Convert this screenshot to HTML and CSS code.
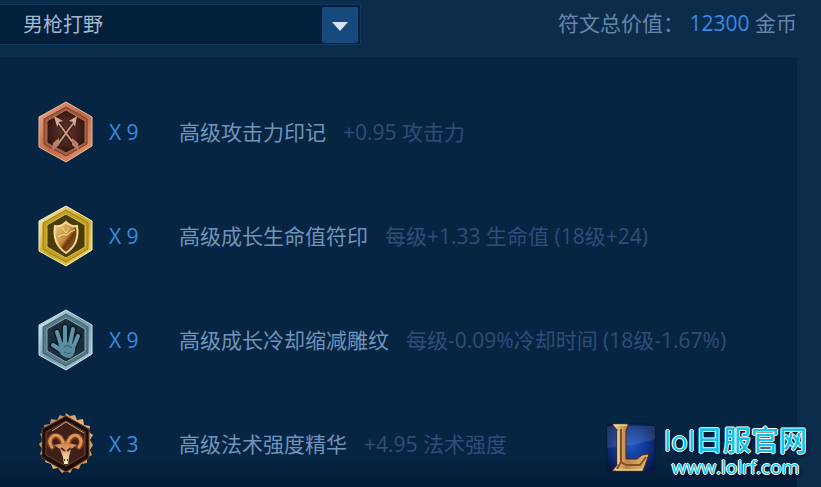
FILE: index.html
```html
<!DOCTYPE html>
<html lang="zh-CN">
<head>
    <meta charset="UTF-8">
    <meta name="viewport" content="width=device-width, initial-scale=1.0">
    <title>符文</title>
    <link rel="stylesheet" href="styles.css">
</head>
<body>

    <div class="topbar">
        <div class="select-box">
            <select class="page-select" aria-label="符文页">
                <option>男枪打野</option>
            </select>
            <svg class="select-arrow" viewBox="0 0 36 36" aria-hidden="true">
                <path d="M10 15h16l-8 9z" fill="#d5e2f2"/>
            </svg>
        </div>
        <div class="total">符文总价值： <span class="price">12300</span> 金币</div>
    </div>

    <ul class="runes">
        <li class="rune">
            <svg class="rune-icon" viewBox="0 0 56 62" aria-hidden="true">
                <defs>
                    <linearGradient id="redEdge" x1="0" y1="0" x2="1" y2="1">
                        <stop offset="0" stop-color="#efa98a"/>
                        <stop offset=".5" stop-color="#bd6848"/>
                        <stop offset="1" stop-color="#eb9c74"/>
                    </linearGradient>
                    <radialGradient id="redCore">
                        <stop offset="0" stop-color="#63382c"/>
                        <stop offset="1" stop-color="#361713"/>
                    </radialGradient>
                </defs>
                <path d="M28 1 54 16v29L28 61 1 46V16z" fill="url(#redEdge)" stroke="#f0b89c"/>
                <path d="M28 6 49 18v25L28 55 6 43V18z" fill="#a65a40" stroke="#7c3a2a"/>
                <path d="M28 9 47 20v22L28 52 9 42V20z" fill="url(#redCore)" stroke="#b06a4d"/>
                <path d="M19 20 36 43M37 20 20 43" stroke="#35150f" stroke-width="4"/>
                <path d="M19 20 36 43M37 20 20 43" stroke="#c99a84" stroke-width="2"/>
                <path d="M16 15l9 5-4 1-2 5zM39 15l-8 5 4 1 2 5z" fill="#dba98f"/>
                <path d="M21 37v7l-7 6 1-8zM34 37v7l7 6-1-8z" fill="#b98169"/>
            </svg>
            <span class="count">X 9</span>
            <span class="name">高级攻击力印记</span>
            <span class="effect">+0.95 攻击力</span>
        </li>
        <li class="rune">
            <svg class="rune-icon" viewBox="0 0 56 62" aria-hidden="true">
                <defs>
                    <linearGradient id="goldEdge" x1="0" y1="0" x2="1" y2="1">
                        <stop offset="0" stop-color="#fff7cf"/>
                        <stop offset=".5" stop-color="#c9a51f"/>
                        <stop offset="1" stop-color="#f5e17a"/>
                    </linearGradient>
                    <linearGradient id="shieldFill" x1="0" y1="0" x2="1" y2="1">
                        <stop offset="0" stop-color="#f3d58c"/>
                        <stop offset=".5" stop-color="#c48c3a"/>
                        <stop offset=".6" stop-color="#693a10"/>
                        <stop offset="1" stop-color="#b37a2e"/>
                    </linearGradient>
                </defs>
                <path d="M28 1 54 16v29L28 61 1 46V16z" fill="url(#goldEdge)" stroke="#fbf2bd"/>
                <path d="M28 5 50 18v26L28 57 5 44V18z" fill="#c4a126" stroke="#9c7b10"/>
                <path d="M28 9 47 20v22L28 53 9 42V20z" fill="#4a3c06" stroke="#d9bf49"/>
                <path d="M28 17q5 5 11 4 3 18-11 27-14-9-11-27 6 1 11-4z" fill="url(#shieldFill)" stroke="#f6d99b" stroke-width="2"/>
                <path d="M20 32q4-4 9-2 3-4 8-5M24 22l4 6 3-5" fill="none" stroke="#f5dfaa"/>
            </svg>
            <span class="count">X 9</span>
            <span class="name">高级成长生命值符印</span>
            <span class="effect">每级+1.33 生命值 (18级+24)</span>
        </li>
        <li class="rune">
            <svg class="rune-icon" viewBox="0 0 56 62" aria-hidden="true">
                <defs>
                    <linearGradient id="blueEdge" x1="0" y1="0" x2="1" y2="1">
                        <stop offset="0" stop-color="#e2f0f5"/>
                        <stop offset=".5" stop-color="#6d9bad"/>
                        <stop offset="1" stop-color="#b5d5e0"/>
                    </linearGradient>
                </defs>
                <path d="M28 1 54 16v29L28 61 1 46V16z" fill="url(#blueEdge)" stroke="#cbe2ea"/>
                <path d="M28 5 50 18v26L28 57 5 44V18z" fill="#56798a" stroke="#3c5d6c"/>
                <path d="M28 9 47 20v22L28 53 9 42V20z" fill="#1b2f3a" stroke="#86a8b6"/>
                <path d="M23 36 19 23M27 34V18M32 35l3-15M35 39l5-12M24 42l-9-6" fill="none" stroke="#091b26" stroke-width="7" stroke-linecap="round"/>
                <path d="M23 36 19 23M27 34V18M32 35l3-15M35 39l5-12M24 42l-9-6" fill="none" stroke="#5f93a8" stroke-width="4" stroke-linecap="round"/>
                <path d="M21 34q8-3 16 2 1 10-5 13-8 0-12-8z" fill="#598ca1"/>
                <path d="M26 38q4-3 8 1M26 43q4 3 7 1" fill="none" stroke="#325c70"/>
            </svg>
            <span class="count">X 9</span>
            <span class="name">高级成长冷却缩减雕纹</span>
            <span class="effect">每级-0.09%冷却时间 (18级-1.67%)</span>
        </li>
        <li class="rune">
            <svg class="rune-icon" viewBox="0 0 56 62" aria-hidden="true">
                <defs>
                    <linearGradient id="bronzeEdge" x1="0" y1="0" x2="1" y2="1">
                        <stop offset="0" stop-color="#b27748"/>
                        <stop offset=".5" stop-color="#e8b885"/>
                        <stop offset="1" stop-color="#c07e48"/>
                    </linearGradient>
                    <linearGradient id="ramFill" x1="0" y1="0" x2="0" y2="1">
                        <stop offset="0" stop-color="#c5763d"/>
                        <stop offset="1" stop-color="#fff0c8"/>
                    </linearGradient>
                </defs>
                <path d="M28 0l4 3 5-1 2 5 6-1 1 6 6 1-1 6 4 3-3 5 3 5-3 5 2 5-5 3v5l-6 1-2 5-6-1-3 5-4-2-4 2-4-5-5 1-2-5-6-2 1-5-6-3 2-5-3-5 4-4-3-6 5-3-1-6 6-1 1-5 6 1 3-5 5 2z" fill="url(#bronzeEdge)"/>
                <path d="M28 3 51 16v29L28 59 4 45V16z" fill="#1c0e0a" stroke="#714025"/>
                <path d="M28 8 47 19v23L28 53 8 42V19z" fill="#3d2118" stroke="#754530"/>
                <path d="M14 18 28 9l18 11" fill="none" stroke="#d59e77"/>
                <path d="M26 32Q22 20 14 24q-5 5 0 10M29 32q4-12 12-8 5 5 0 10" fill="none" stroke="#7d3b1b" stroke-width="6" stroke-linecap="round"/>
                <path d="M26 31Q22 20 15 23q-6 5-1 11M29 31q4-11 11-8 6 5 1 11" fill="none" stroke="#dc955a" stroke-width="3" stroke-linecap="round"/>
                <path d="M16 32l9-2 3-2 3 2 8 2-6 4-2 8-1 7h-4l-1-7-3-8z" fill="url(#ramFill)"/>
                <path d="M23 35l4 3M33 35l-4 3M26 47h1M30 47h-1" stroke="#5a2814" stroke-width="2"/>
            </svg>
            <span class="count">X 3</span>
            <span class="name">高级法术强度精华</span>
            <span class="effect">+4.95 法术强度</span>
        </li>
    </ul>

    <a class="site-badge" href="#">
        <svg class="site-logo" viewBox="0 0 50 50" aria-hidden="true">
            <defs>
                <radialGradient id="logoBg" cx=".5" cy=".45" r=".65">
                    <stop offset="0" stop-color="#1c56c4"/>
                    <stop offset=".6" stop-color="#0e3083"/>
                    <stop offset="1" stop-color="#07183f"/>
                </radialGradient>
                <linearGradient id="logoGold" x1="0" y1="0" x2="1" y2="0">
                    <stop offset="0" stop-color="#f4dfa4"/>
                    <stop offset=".4" stop-color="#b98543"/>
                    <stop offset="1" stop-color="#e5bf7c"/>
                </linearGradient>
            </defs>
            <rect x="1" y="1" width="48" height="48" rx="3" fill="url(#logoBg)" stroke="#0a1a3c"/>
            <path d="M1 25Q25 24 49 16V3H1z" fill="#fff" opacity=".1"/>
            <path d="M6 1h17l-3 6v29h11l5-4 7-1-6 17H6l5-6V7z" fill="url(#logoGold)" stroke="#4e2810"/>
            <path d="M15 6v33l-4 7M15 39l5 3h14l6-8" fill="none" stroke="#8a4e22" stroke-width="2"/>
            <path d="M8 2h13M12 8v33M10 47h26" fill="none" stroke="#ffefc0"/>
        </svg>
        <span class="site-text">
            <span class="site-name">lol日服官网</span>
            <span class="site-url">www.lolrf.com</span>
        </span>
    </a>

</body>
</html>
```

FILE: styles.css
```css
* {
    box-sizing: border-box;
}

body {
    display: flex;
    flex-direction: column;
    min-height: 100vh;
    margin: 0;
    padding-right: 24px;
    background-color: #0c2c4b;
    font-family: "Open Sans", "Noto Sans CJK SC", sans-serif;
    font-size: 21px;
    line-height: 30px;
    color: #6685a8;
}

.topbar {
    display: flex;
    justify-content: space-between;
    padding: 4px 0 12px;
}

.select-box {
    display: grid;
    align-items: center;
    width: 100%;
    max-width: 361px;
    height: 41px;
    border: 1px solid #0d3b60;
    border-left: none;
    border-radius: 0 2px 2px 0;
    background-color: #021f3b;
}

.page-select {
    grid-area: 1 / 1;
    width: 100%;
    height: 100%;
    padding: 0 40px 0 23px;
    border: none;
    background: none;
    appearance: none;
    font-family: inherit;
    font-size: 20px;
    color: #a3b8cf;
}

.select-arrow {
    grid-area: 1 / 1;
    justify-self: end;
    width: 36px;
    height: 36px;
    margin-right: 2px;
    border-radius: 2px;
    background-color: #174a7c;
    pointer-events: none;
}

.total {
    padding-top: 4px;
    white-space: nowrap;
}

.price {
    color: #338ae8;
}

.runes {
    flex: 1;
    display: flex;
    flex-direction: column;
    gap: 42px;
    margin: 0;
    padding: 44px 0 10px 38px;
    background: linear-gradient(to bottom, #052543 92%, #031c38);
    list-style: none;
}

.rune {
    display: flex;
    align-items: center;
    white-space: nowrap;
}

.rune-icon {
    width: 56px;
    height: 62px;
    margin-right: 15px;
}

.count {
    width: 70px;
    color: #388ce2;
}

.name {
    margin-right: 17px;
    color: #7194ba;
}

.effect {
    color: #2e4e78;
}

.site-badge {
    position: absolute;
    right: 14px;
    bottom: 8px;
    display: flex;
    align-items: center;
    gap: 8px;
    text-decoration: none;
}

.site-logo {
    width: 50px;
    height: 50px;
    margin-bottom: 6px;
}

.site-text {
    display: flex;
    flex-direction: column;
    align-items: center;
    color: #10c4e8;
    text-shadow: 1px 0 #fff, -1px 0 #fff, 0 1px #fff, 0 -1px #fff, 2px 2px 3px #001020;
}

.site-name {
    font-size: 28px;
    line-height: 32px;
    font-weight: 500;
}

.site-url {
    font-size: 19px;
    line-height: 22px;
    font-weight: 500;
}
```
